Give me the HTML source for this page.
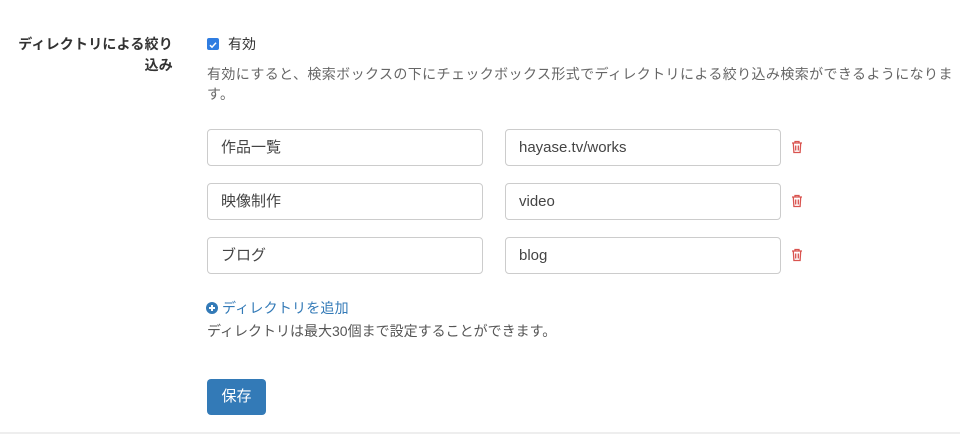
<!DOCTYPE html>
<html><head><meta charset="utf-8"><style>
body{margin:0;width:960px;height:434px;background:#fff;font-family:"Liberation Sans","Noto Sans CJK JP",sans-serif;color:#333;position:relative;overflow:hidden}
.a{position:absolute}
.lbl{right:787px;top:34px;text-align:right;font-weight:bold;font-size:14px;line-height:21px;color:#333;white-space:nowrap;letter-spacing:0.2px}
.cb{left:207px;top:38px;width:12px;height:12px;background:#2f7de1;border-radius:2px}
.desc{left:207px;top:64px;font-size:14px;line-height:20px;color:#666;white-space:nowrap;letter-spacing:0.4px}
.in{height:35px;border:1px solid #ccc;border-radius:4px;font-size:15px;line-height:35px;padding-left:13px;box-sizing:content-box;color:#444}
.l{left:207px;width:261px}
.r{left:505px;width:261px}
.btn{left:207px;top:379px;width:59px;height:36px;background:#337ab7;border-radius:4px;color:#fff;font-size:15px;line-height:36px;text-align:center}
</style></head><body>
<div class="a lbl">ディレクトリによる絞り<br>込み</div>
<div class="a cb"><svg width="12" height="12" viewBox="0 0 12 12"><path d="M3 6.2l2 2 4-4.4" stroke="#fff" stroke-width="1.5" fill="none"/></svg></div>
<div class="a" style="left:228px;top:35px;font-size:14px;line-height:18px">有効</div>
<div class="a desc">有効にすると、検索ボックスの下にチェックボックス形式でディレクトリによる絞り込み検索ができるようになりま<br>す。</div>

<div class="a in l" style="top:129px">作品一覧</div>
<div class="a in r" style="top:129px">hayase.tv/works</div>
<div class="a in l" style="top:183px">映像制作</div>
<div class="a in r" style="top:183px">video</div>
<div class="a in l" style="top:237px">ブログ</div>
<div class="a in r" style="top:237px">blog</div>

<svg class="a" style="left:791px;top:140px" width="12" height="14" viewBox="0 0 12 14"><g fill="none" stroke="#d9534f" stroke-width="1.3"><path d="M1 3h10M4 3V1.5h4V3M2.3 3l.6 9.5h6.2L9.7 3M4.7 5.5v5M7.3 5.5v5"/></g></svg>
<svg class="a" style="left:791px;top:194px" width="12" height="14" viewBox="0 0 12 14"><g fill="none" stroke="#d9534f" stroke-width="1.3"><path d="M1 3h10M4 3V1.5h4V3M2.3 3l.6 9.5h6.2L9.7 3M4.7 5.5v5M7.3 5.5v5"/></g></svg>
<svg class="a" style="left:791px;top:248px" width="12" height="14" viewBox="0 0 12 14"><g fill="none" stroke="#d9534f" stroke-width="1.3"><path d="M1 3h10M4 3V1.5h4V3M2.3 3l.6 9.5h6.2L9.7 3M4.7 5.5v5M7.3 5.5v5"/></g></svg>

<svg class="a" style="left:206px;top:302px" width="12" height="12" viewBox="0 0 12 12"><circle cx="6" cy="6" r="6" fill="#337ab7"/><path d="M6 3v6M3 6h6" stroke="#fff" stroke-width="2"/></svg>
<div class="a" style="left:222px;top:298px;font-size:14px;line-height:20px;color:#337ab7;letter-spacing:0.2px">ディレクトリを追加</div>
<div class="a" style="left:207px;top:321px;font-size:14px;line-height:20px;color:#555">ディレクトリは最大30個まで設定することができます。</div>
<div class="a btn">保存</div>
<div class="a" style="left:0;top:432px;width:960px;height:2px;background:#eee"></div>
</body></html>
